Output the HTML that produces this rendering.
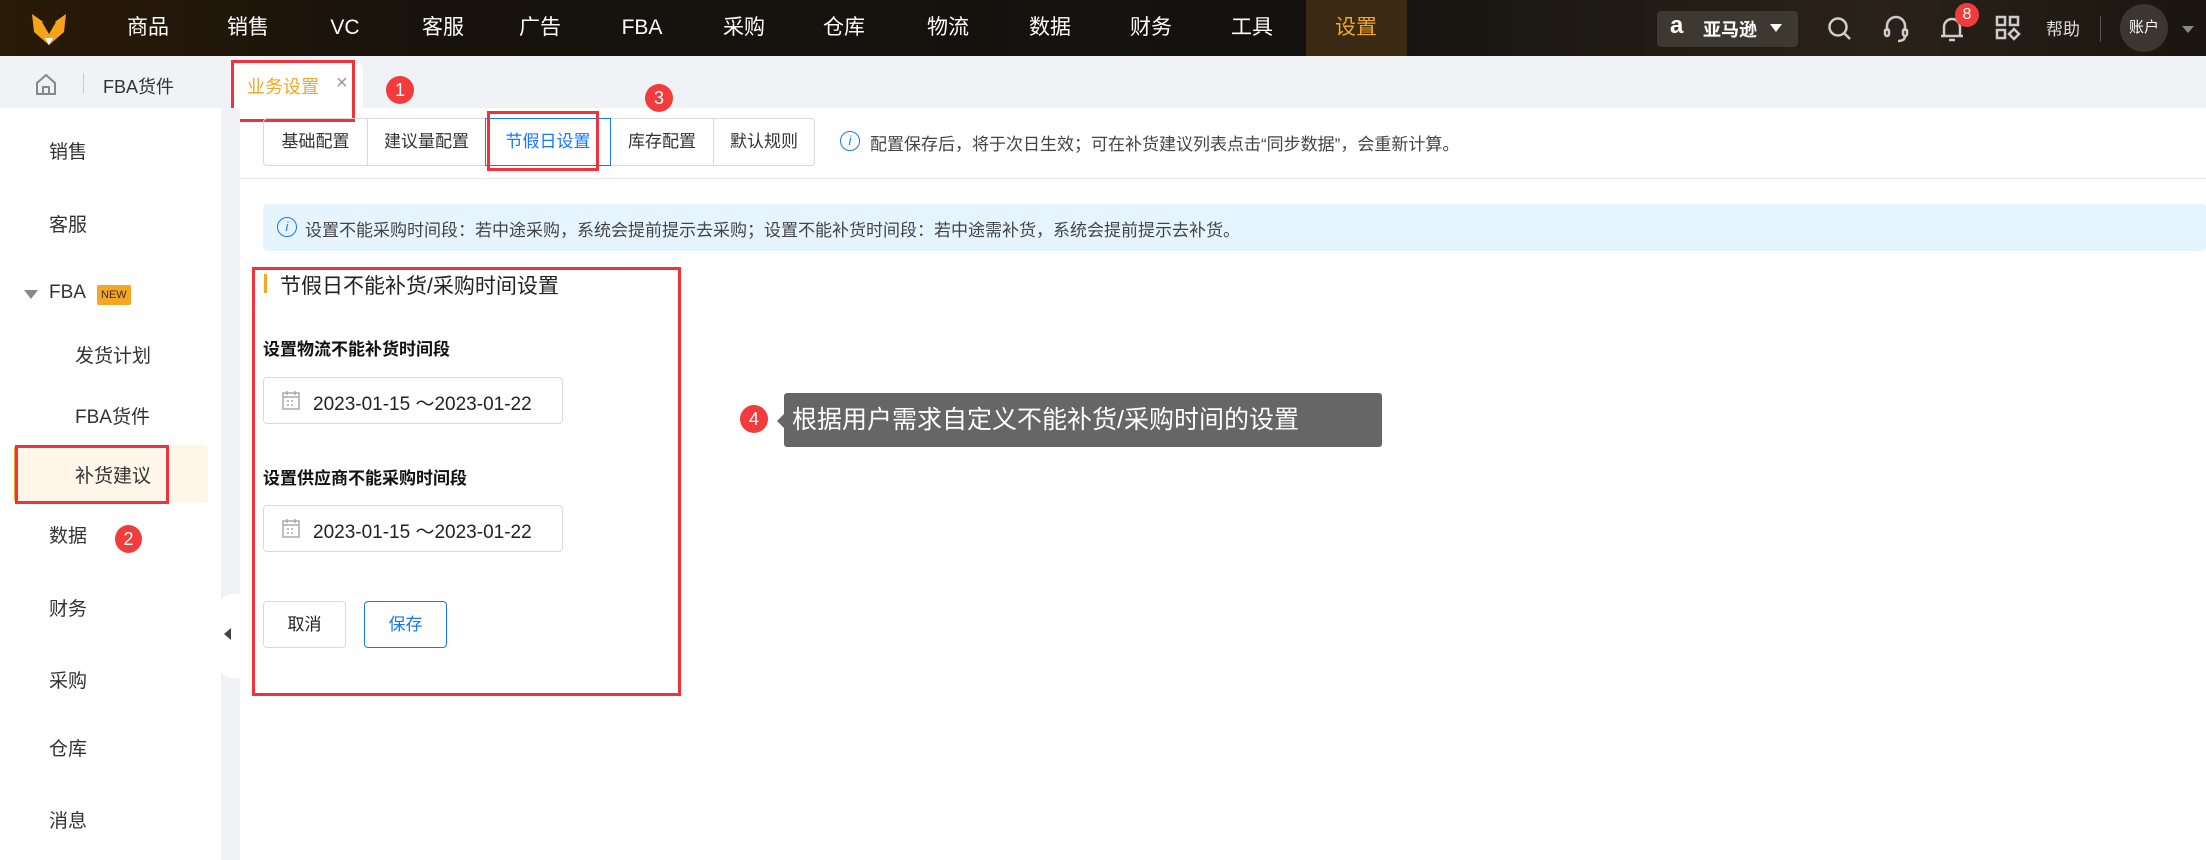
<!DOCTYPE html>
<html><head><meta charset="utf-8"><style>
*{margin:0;padding:0;box-sizing:border-box}
body{width:2206px;height:860px;overflow:hidden;position:relative;background:#fff;font-family:"Liberation Sans","Noto Sans CJK SC",sans-serif;color:#333}
.a{position:absolute;white-space:nowrap}
.nav{left:0;top:0;width:2206px;height:56px;background:linear-gradient(90deg,#2a1a08 0%,#17120c 20%,#141210 60%,#2a2218 85%,#1a1510 100%)}
.mi{top:0;height:56px;line-height:56px;color:#fff;font-size:21px;transform:translateX(-50%)}
.badge{border-radius:50%;background:#f23c3c;color:#fff;text-align:center;font-size:16px}
.side{font-size:19px;color:#333}
.rb{border:3px solid #f0323c}
.seg{top:118px;height:48px;line-height:46px;border:1px solid #d9d9d9;font-size:17px;text-align:center;color:#333}
</style></head><body>
<div class="a nav"></div>
<svg class="a" style="left:30px;top:12px" width="38" height="34" viewBox="0 0 38 34"><path d="M2 2 L19 14 L36 2 L34 20 L19 33 L4 20Z" fill="#f5a31a"/><path d="M12 10 L19 22 L26 10Z" fill="#2a1a08"/><path d="M15 26 L19 33 L23 26Z" fill="#fff"/></svg>
<div class="a mi" style="left:148px">商品</div><div class="a mi" style="left:248px">销售</div><div class="a mi" style="left:345px">VC</div><div class="a mi" style="left:443px">客服</div><div class="a mi" style="left:540px">广告</div><div class="a mi" style="left:642px">FBA</div><div class="a mi" style="left:744px">采购</div><div class="a mi" style="left:844px">仓库</div><div class="a mi" style="left:948px">物流</div><div class="a mi" style="left:1050px">数据</div><div class="a mi" style="left:1151px">财务</div><div class="a mi" style="left:1252px">工具</div>
<div class="a" style="left:1306px;top:0;width:101px;height:56px;background:#3a2a14"></div>
<div class="a mi" style="left:1356px;color:#f5a623">设置</div>
<div class="a" style="left:1657px;top:11px;width:141px;height:36px;background:#3d3830;border-radius:4px"></div>
<div class="a" style="left:1670px;top:12px;color:#fff;font-size:24px;font-weight:bold">a</div>
<div class="a" style="left:1703px;top:16px;color:#fff;font-size:18px;font-weight:bold">亚马逊</div>
<div class="a" style="left:1770px;top:24px;border:6px solid transparent;border-top:8px solid #fff"></div>
<svg class="a" style="left:1826px;top:15px" width="28" height="28" viewBox="0 0 28 28" fill="none" stroke="#ccc" stroke-width="2.5"><circle cx="12" cy="12" r="8.5"/><path d="M18 18l6 6"/></svg>
<svg class="a" style="left:1882px;top:14px" width="28" height="30" viewBox="0 0 28 30" fill="none" stroke="#ccc" stroke-width="2.5"><path d="M5 17V12a9 9 0 0118 0v5"/><rect x="3" y="15" width="4" height="7" rx="2"/><rect x="21" y="15" width="4" height="7" rx="2"/><path d="M23 22q0 5-7 5"/></svg>
<svg class="a" style="left:1938px;top:14px" width="28" height="30" viewBox="0 0 28 30" fill="none" stroke="#ccc" stroke-width="2.5"><path d="M6 22V13a8 8 0 0116 0v9M3 22h22M11 26h6"/></svg>
<div class="a badge" style="left:1955px;top:3px;width:24px;height:24px;line-height:24px">8</div>
<svg class="a" style="left:1995px;top:15px" width="26" height="26" viewBox="0 0 26 26" fill="none" stroke="#ccc" stroke-width="2.5"><rect x="2" y="2" width="8" height="8"/><rect x="15" y="2" width="8" height="8"/><rect x="2" y="15" width="8" height="8"/><path d="M19 14l5 5-5 5-5-5z"/></svg>
<div class="a" style="left:2046px;top:15px;color:#ddd;font-size:17px">帮助</div>
<div class="a" style="left:2100px;top:16px;width:1px;height:26px;background:#555"></div>
<div class="a" style="left:2120px;top:4px;width:48px;height:48px;border-radius:50%;background:#3b3630;color:#fff;font-size:15px;line-height:48px;text-align:center">账户</div>
<div class="a" style="left:2182px;top:26px;border:6px solid transparent;border-top:7px solid #888"></div>

<div class="a" style="left:0;top:56px;width:2206px;height:52px;background:#f0f2f5"></div>
<svg class="a" style="left:34px;top:72px" width="24" height="24" viewBox="0 0 24 24" fill="none" stroke="#888" stroke-width="2"><path d="M3 11L12 3l9 8v11H3z M9 22v-7h6v7"/></svg>
<div class="a" style="left:83px;top:73px;width:1px;height:20px;background:#ccc"></div>
<div class="a" style="left:103px;top:73px;font-size:18px">FBA货件</div>
<div class="a" style="left:231px;top:63px;width:132px;height:45px;background:#fff;border-radius:6px 6px 0 0"></div>
<div class="a" style="left:247px;top:73px;font-size:18px;color:#f5a623">业务设置</div>
<div class="a" style="left:336px;top:72px;font-size:20px;color:#999">×</div>
<div class="a rb" style="left:231px;top:60px;width:124px;height:62px"></div>
<div class="a badge" style="left:386px;top:76px;width:28px;height:28px;line-height:28px;font-size:18px">1</div>

<div class="a" style="left:221px;top:108px;width:19px;height:752px;background:#f0f2f5"></div>
<div class="a" style="left:221px;top:594px;width:19px;height:84px;background:#fff;border-radius:10px 0 0 10px"></div>
<div class="a" style="left:224px;top:628px;border:6px solid transparent;border-right:7px solid #444;border-left:0"></div>
<div class="a" style="left:14px;top:445px;width:194px;height:58px;background:#fef6e8;border-left:4px solid #f5a623;border-radius:4px"></div>
<div class="a side" style="left:49px;top:137px">销售</div>
<div class="a side" style="left:49px;top:210px">客服</div>
<div class="a" style="left:24px;top:290px;border:7px solid transparent;border-top:9px solid #888"></div>
<div class="a side" style="left:49px;top:282px">FBA</div>
<div class="a" style="left:97px;top:285px;background:#f5a623;color:#333;font-size:11px;padding:2px 4px;border-radius:2px;line-height:16px">NEW</div>
<div class="a side" style="left:75px;top:341px">发货计划</div>
<div class="a side" style="left:75px;top:402px">FBA货件</div>
<div class="a side" style="left:75px;top:461px">补货建议</div>
<div class="a rb" style="left:15px;top:445px;width:154px;height:59px"></div>
<div class="a side" style="left:49px;top:521px">数据</div>
<div class="a badge" style="left:115px;top:525px;width:27px;height:28px;line-height:28px;font-size:18px">2</div>
<div class="a side" style="left:49px;top:594px">财务</div>
<div class="a side" style="left:49px;top:666px">采购</div>
<div class="a side" style="left:49px;top:734px">仓库</div>
<div class="a side" style="left:49px;top:806px">消息</div>

<div class="a seg" style="left:263px;width:105px;border-radius:4px 0 0 4px">基础配置</div>
<div class="a seg" style="left:367px;width:119px">建议量配置</div>
<div class="a seg" style="left:485px;width:126px;border-color:#1677ff;color:#1677ff;z-index:2">节假日设置</div>
<div class="a seg" style="left:610px;width:104px">库存配置</div>
<div class="a seg" style="left:713px;width:102px;border-radius:0 4px 4px 0">默认规则</div>
<div class="a rb" style="left:487px;top:111px;width:112px;height:60px;z-index:3"></div>
<div class="a badge" style="left:645px;top:84px;width:28px;height:28px;line-height:28px;font-size:18px">3</div>
<div class="a" style="left:840px;top:131px;width:20px;height:20px;border:1.5px solid #1677ff;border-radius:50%;color:#1677ff;font-size:13px;text-align:center;line-height:17px;font-style:italic">i</div>
<div class="a" style="left:870px;top:130px;font-size:17px;color:#444">配置保存后，将于次日生效；可在补货建议列表点击“同步数据”，会重新计算。</div>
<div class="a" style="left:240px;top:178px;width:1966px;height:1px;background:#e8e8e8"></div>

<div class="a" style="left:263px;top:204px;width:1943px;height:47px;background:#e6f4ff;border-radius:4px"></div>
<div class="a" style="left:277px;top:217px;width:20px;height:20px;border:1.5px solid #1677ff;border-radius:50%;color:#1677ff;font-size:13px;text-align:center;line-height:17px;font-style:italic">i</div>
<div class="a" style="left:305px;top:216px;font-size:17px;color:#444">设置不能采购时间段：若中途采购，系统会提前提示去采购；设置不能补货时间段：若中途需补货，系统会提前提示去补货。</div>

<div class="a rb" style="left:252px;top:267px;width:429px;height:429px"></div>
<div class="a" style="left:264px;top:274px;width:3px;height:19px;background:#f5a623"></div>
<div class="a" style="left:280px;top:270px;font-size:21px;color:#222">节假日不能补货/采购时间设置</div>
<div class="a" style="left:263px;top:335px;font-size:17px;font-weight:bold;color:#111">设置物流不能补货时间段</div>
<div class="a" style="left:263px;top:377px;width:300px;height:47px;border:1px solid #d9d9d9;border-radius:4px"></div>
<svg class="a" style="left:282px;top:390px" width="18" height="20" viewBox="0 0 18 20" fill="none" stroke="#aaa" stroke-width="1.5"><rect x="1" y="3" width="16" height="16"/><path d="M1 7h16M5 1v4M13 1v4M5 11h2M9 11h2M5 15h2M9 15h2"/></svg>
<div class="a" style="left:313px;top:389px;font-size:19px;color:#222">2023-01-15 ～2023-01-22</div>
<div class="a" style="left:263px;top:464px;font-size:17px;font-weight:bold;color:#111">设置供应商不能采购时间段</div>
<div class="a" style="left:263px;top:505px;width:300px;height:47px;border:1px solid #d9d9d9;border-radius:4px"></div>
<svg class="a" style="left:282px;top:518px" width="18" height="20" viewBox="0 0 18 20" fill="none" stroke="#aaa" stroke-width="1.5"><rect x="1" y="3" width="16" height="16"/><path d="M1 7h16M5 1v4M13 1v4M5 11h2M9 11h2M5 15h2M9 15h2"/></svg>
<div class="a" style="left:313px;top:517px;font-size:19px;color:#222">2023-01-15 ～2023-01-22</div>
<div class="a" style="left:263px;top:601px;width:83px;height:47px;border:1px solid #d9d9d9;border-radius:4px;text-align:center;line-height:45px;font-size:17px;color:#222">取消</div>
<div class="a" style="left:364px;top:601px;width:83px;height:47px;border:1px solid #1677ff;border-radius:4px;text-align:center;line-height:45px;font-size:17px;color:#1677ff">保存</div>

<div class="a badge" style="left:740px;top:405px;width:28px;height:28px;line-height:28px;font-size:18px">4</div>
<div class="a" style="left:777px;top:414px;border:7px solid transparent;border-right:7px solid #666;border-left:0"></div>
<div class="a" style="left:784px;top:393px;width:598px;height:54px;background:#666;border-radius:3px;color:#fff;font-size:25px;line-height:54px;padding-left:8px">根据用户需求自定义不能补货/采购时间的设置</div>
</body></html>
